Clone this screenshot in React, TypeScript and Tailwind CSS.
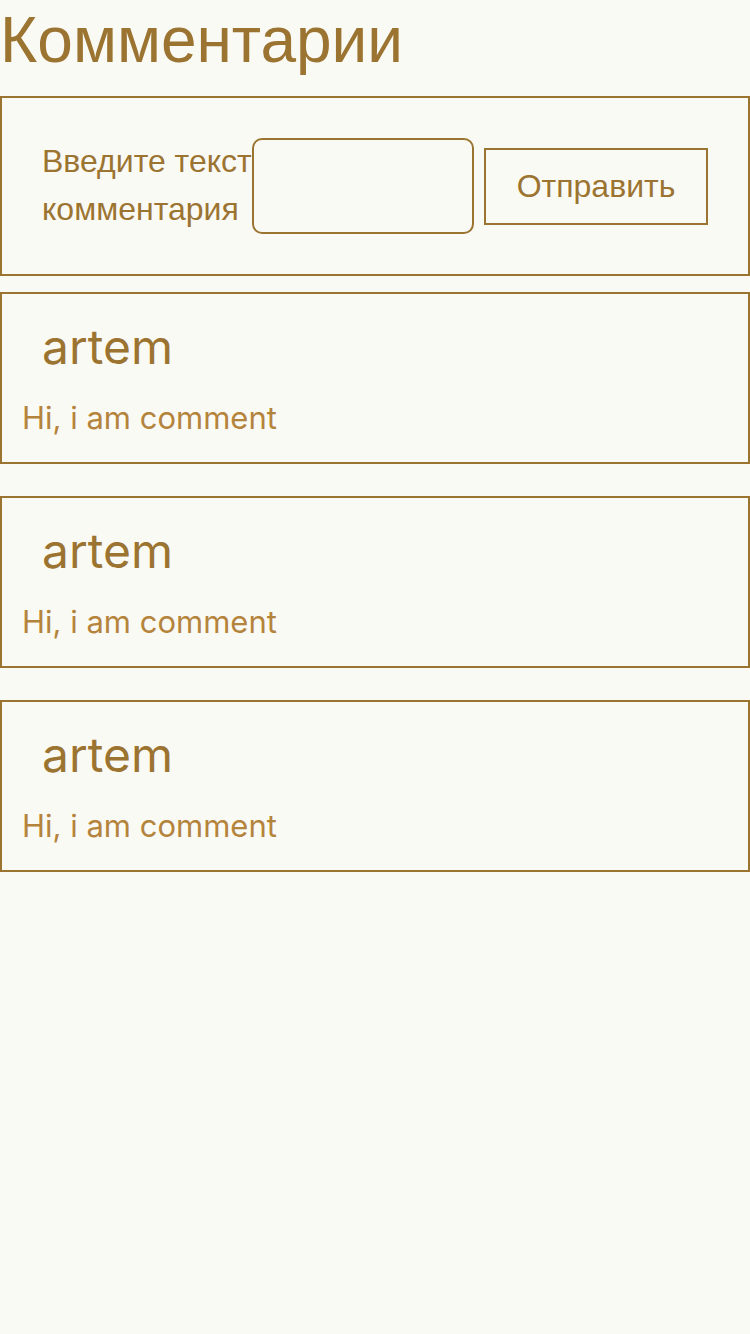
import React from 'react'

const comments = [
    { author: 'artem', text: 'Hi, i am comment' },
    { author: 'artem', text: 'Hi, i am comment' },
    { author: 'artem', text: 'Hi, i am comment' },
]

const App = () => {
    return (
        <div className="min-h-[1334px] bg-[#fafaf5] font-['Liberation_Sans',Arial,sans-serif] text-[#9c7431]">
            {/* Header */}
            <h1 className="text-[64px] leading-[80px] font-normal">Комментарии</h1>

            {/* Form */}
            <form
                className="mt-[16px] flex items-center border-2 border-[#9c7431] p-[40px]"
                onSubmit={(e) => e.preventDefault()}
            >
                <label htmlFor="comment" className="-mt-[3px] w-[210px] shrink-0 text-[32px] leading-[48px]">
                    Введите текст комментария
                </label>
                <input
                    id="comment"
                    type="text"
                    className="h-[96px] w-[222px] shrink-0 rounded-[10px] border-2 border-[#9c7431] bg-transparent outline-none"
                />
                <button
                    type="submit"
                    className="ml-[10px] h-[77px] w-[224px] shrink-0 border-2 border-[#9c7431] bg-transparent text-[32px] text-[#9c7431]"
                >
                    Отправить
                </button>
            </form>

            {/* Comments list */}
            <div className="mt-[16px] flex flex-col gap-[32px]">
                {comments.map((comment, index) => (
                    <div
                        key={index}
                        className="border-2 border-[#9c7431] px-[20px] pt-[25px] pb-[24px] font-['Inter',sans-serif]"
                    >
                        <div className="pl-[20px] text-[48px] leading-[56px] text-[#9c7431]">
                            {comment.author}
                        </div>
                        <p className="mt-[23px] text-[31px] leading-[40px] text-[#b5843c]">
                            {comment.text}
                        </p>
                    </div>
                ))}
            </div>
        </div>
    )
}

export default App
